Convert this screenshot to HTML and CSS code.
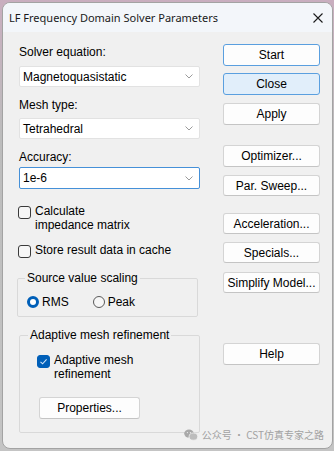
FILE: index.html
```html
<!DOCTYPE html>
<html lang="en">
<head>
  <meta charset="UTF-8">
  <title>LF Frequency Domain Solver Parameters</title>
  <link rel="stylesheet" href="styles.css">
</head>
<body>

<!-- dialog window -->
<div class="window">
  <div class="titlebar">
    <span class="title">LF Frequency Domain Solver Parameters</span>
    <svg class="close-x" width="10" height="10" viewBox="0 0 10 10">
      <path d="M0.5 0.5 L9.5 9.5 M9.5 0.5 L0.5 9.5" stroke="#1c1c1c" stroke-width="1.1" fill="none"/>
    </svg>
  </div>

  <div class="dialog">
    <!-- left column: fields -->
    <div class="fields">
      <div class="label">Solver equation:</div>
      <div class="select sel-1">
        <span>Magnetoquasistatic</span>
        <svg class="chev" width="8" height="5" viewBox="0 0 8 5"><path d="M0.5 0.5 L4 4 L7.5 0.5" stroke="#9a9a9a" fill="none"/></svg>
      </div>

      <div class="label lbl-2">Mesh type:</div>
      <div class="select sel-2">
        <span>Tetrahedral</span>
        <svg class="chev" width="8" height="5" viewBox="0 0 8 5"><path d="M0.5 0.5 L4 4 L7.5 0.5" stroke="#9a9a9a" fill="none"/></svg>
      </div>

      <div class="label lbl-3">Accuracy:</div>
      <div class="select sel-3 focused">
        <span>1e-6</span>
        <svg class="chev" width="8" height="5" viewBox="0 0 8 5"><path d="M0.5 0.5 L4 4 L7.5 0.5" stroke="#9a9a9a" fill="none"/></svg>
      </div>

      <div class="check chk-1">
        <span class="box"></span>
        <span class="check-text">Calculate<br>impedance matrix</span>
      </div>
      <div class="check chk-2">
        <span class="box"></span>
        <span class="check-text">Store result data in cache</span>
      </div>

      <fieldset class="group grp-scaling">
        <legend>Source value scaling</legend>
        <div class="radios">
          <span class="radio on"></span><span class="radio-text">RMS</span>
          <span class="radio peak"></span><span class="radio-text">Peak</span>
        </div>
      </fieldset>

      <fieldset class="group grp-adaptive">
        <legend>Adaptive mesh refinement</legend>
        <div class="check chk-adaptive">
          <span class="box on">
            <svg width="13" height="13" viewBox="0 0 13 13"><path d="M3.5 6.8 L5.6 8.8 L9.6 4.4" stroke="#cfe3f7" stroke-width="1.1" fill="none"/></svg>
          </span>
          <span class="check-text">Adaptive mesh<br>refinement</span>
        </div>
        <div class="btn btn-props">Properties...</div>
      </fieldset>
    </div>

    <!-- right column: buttons -->
    <div class="buttons">
      <div class="btn btn-start">Start</div>
      <div class="btn btn-close">Close</div>
      <div class="btn btn-apply">Apply</div>
      <div class="btn btn-opt">Optimizer...</div>
      <div class="btn btn-sweep">Par. Sweep...</div>
      <div class="btn btn-accel">Acceleration...</div>
      <div class="btn btn-spec">Specials...</div>
      <div class="btn btn-simp">Simplify Model...</div>
      <div class="btn btn-help">Help</div>
    </div>
  </div>

  <!-- watermark from the source picture -->
  <div class="watermark">
    <svg width="14" height="12" viewBox="0 0 14 12">
      <ellipse cx="5" cy="4.6" rx="4.8" ry="4" fill="#a9a9a9"/>
      <ellipse cx="9.4" cy="7.6" rx="4.3" ry="3.6" fill="#bdbdbd" stroke="#f0f0f0" stroke-width="0.8"/>
      <circle cx="3.4" cy="3.6" r="0.6" fill="#f0f0f0"/>
      <circle cx="6.4" cy="3.6" r="0.6" fill="#f0f0f0"/>
    </svg>
    <span>公众号 · CST仿真专家之路</span>
  </div>
</div>

</body>
</html>
```

FILE: styles.css
```css
/* page + window frame */
body {
  margin: 0;
  height: 451px;
  overflow: hidden;
  background: linear-gradient(#c9aebf, #bcbcbc 30%, #c4c4c4);
  font-family: "Liberation Sans", Arial, sans-serif;
  font-size: 12px;
  color: #000;
}
.window {
  position: relative;
  margin: 2px 0 0 2px;
  width: 329px;
  height: 445px;
  border: 1px solid #a3a3a3;
  border-radius: 8px;
  background: #f0f0f0;
  overflow: hidden;
}

/* title bar */
.titlebar {
  height: 29px;
  background: #f3f6fa;
  display: flex;
  align-items: center;
  justify-content: space-between;
  padding: 0 9px 0 6px;
}
.titlebar .title {
  font-family: "Noto Sans", "Open Sans", sans-serif;
  font-size: 11px;
  color: #1a1a1a;
}

/* body: two columns */
.dialog {
  display: flex;
  padding-left: 16px;
}
.fields {
  width: 181px;
  padding-top: 13px;
  display: flex;
  flex-direction: column;
}
.buttons {
  width: 97px;
  margin-left: 23px;
  padding-top: 12px;
  display: flex;
  flex-direction: column;
}

/* labels + combo boxes */
.label {
  line-height: 14px;
  height: 14px;
}
.lbl-2 { margin-top: 11px; }
.lbl-3 { margin-top: 11px; }

.select {
  box-sizing: border-box;
  height: 21px;
  background: #fff;
  border: 1px solid #e2e2e2;
  border-radius: 2px;
  display: flex;
  align-items: center;
  justify-content: space-between;
  padding: 0 6px 0 3px;
}
.sel-1 { margin-top: 7px; }
.sel-2 { margin-top: 6px; }
.sel-3 { margin-top: 3px; height: 22px; }
.select.focused {
  border-color: #4590d8;
}

/* check boxes */
.check {
  display: flex;
  align-items: flex-start;
  line-height: 14px;
}
.check .box {
  box-sizing: border-box;
  width: 13px;
  height: 13px;
  margin-top: 2px;
  margin-right: 4px;
  border: 1px solid #3a3a3a;
  border-radius: 3px;
  background: #f6f6f6;
  flex: none;
}
.check .box.on {
  background: #005fb8;
  border-color: #005fb8;
}
.check .box.on svg {
  display: block;
  margin: -1px;
}
.chk-1 { margin-top: 15px; margin-left: -1px; }
.chk-2 { margin-top: 11px; margin-left: -1px; }

/* group boxes */
.group {
  box-sizing: border-box;
  border: 1px solid #d9d9d9;
  border-radius: 2px;
  margin: 0;
}
.group legend {
  padding: 0 2px;
  line-height: 14px;
}
.grp-scaling {
  margin: 13px 0 0 -2px;
  width: 181px;
  height: 46px;
  padding: 0 6px 0 9px;
}
.grp-scaling legend { margin-left: -2px; }
.grp-adaptive {
  margin-top: 11px;
  width: 181px;
  height: 105px;
  padding: 11px 6px 0 17px;
}
.grp-adaptive legend { margin-left: -9px; }

.radios {
  display: flex;
  align-items: center;
  height: 14px;
  margin-top: 10px;
}
.radio {
  box-sizing: border-box;
  width: 12px;
  height: 12px;
  border-radius: 50%;
  border: 1px solid #5a5a5a;
  background: #f6f6f6;
  margin-right: 3px;
}
.radio.on {
  border: 3.5px solid #005fb8;
  background: #fff;
}
.radio.peak { margin-left: 24px; }

/* push buttons */
.btn {
  box-sizing: border-box;
  height: 22px;
  line-height: 20px;
  text-align: center;
  background: #fdfdfd;
  border: 1px solid #d4d4d4;
  border-bottom-color: #c4c4c4;
  border-radius: 3px;
}
.btn-start { border-color: #5a9fdf; background: #fdfdfd; }
.btn-close { margin-top: 7px; border-color: #5a9fdf; background: #e1eefa; }
.btn-apply { margin-top: 8px; }
.btn-opt { margin-top: 20px; }
.btn-sweep { margin-top: 8px; height: 21px; }
.btn-accel { margin-top: 17px; height: 21px; }
.btn-spec { margin-top: 8px; height: 21px; }
.btn-simp { margin-top: 9px; height: 21px; }
.btn-help { margin-top: 50px; }

.btn-props {
  width: 101px;
  margin: 16px 0 0 2px;
}

/* watermark */
.watermark {
  position: absolute;
  right: 8px;
  bottom: 6px;
  display: flex;
  align-items: center;
  gap: 4px;
  font-family: "Noto Sans CJK SC", sans-serif;
  font-size: 10px;
  color: #a2a2a2;
}
.watermark svg { display: block; }
```
